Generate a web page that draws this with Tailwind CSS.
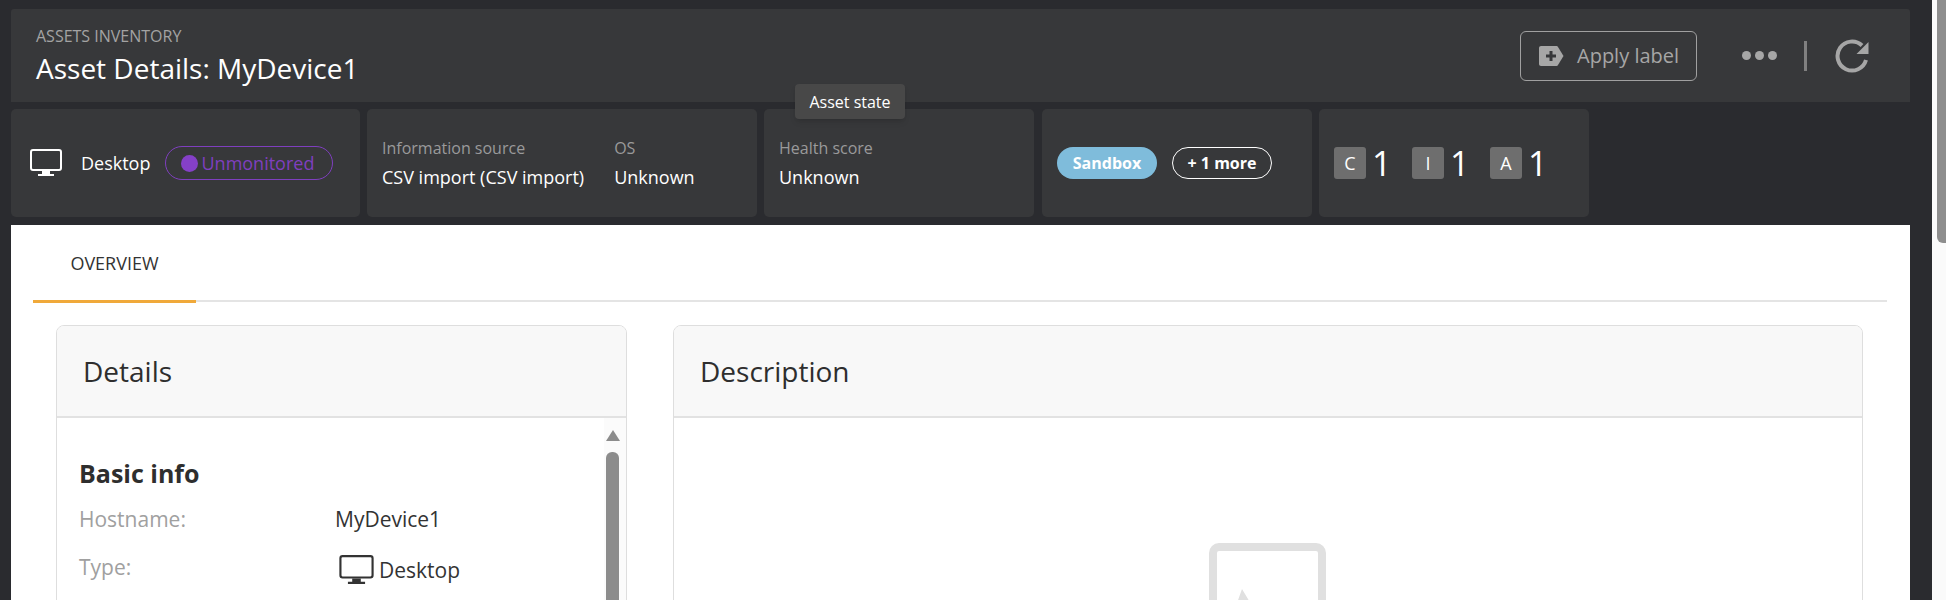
<!DOCTYPE html>
<html lang="en">
<head>
    <meta charset="UTF-8">
    <title>Asset Details</title>
    <script src="https://cdn.jsdelivr.net/npm/@tailwindcss/browser@4"></script>
</head>
<body class="h-[600px] overflow-hidden flex bg-[#2a2b2f] font-['Open_Sans','Noto_Sans',sans-serif]">
    <div class="w-[1932px] h-[600px] overflow-hidden pl-[11px] pr-[22px] pt-[9px] relative">
        <header class="h-[93px] bg-[#37383a] rounded-t-[3px] flex items-center justify-between pl-[25px] pr-[40px]">
            <div>
                <div class="text-[16px] leading-[22px] text-[#a3a3a3] uppercase">Assets Inventory</div>
                <h1 class="text-[28px] leading-[38px] font-medium text-white mt-[2px]">Asset Details: MyDevice1</h1>
            </div>
            <div class="flex items-center">
                <button class="w-[177px] h-[50px] border border-[#a0a0a0] rounded-[6px] flex items-center pl-[18px] text-[#a6a6a6] text-[20px]">
                    <svg class="w-[25px] h-[20px] mr-[13px]" viewBox="0 0 25 20"><path fill="#a6a6a6" d="M2 0h15c1 0 1.600.4 2 1l5.500 9-5.500 9c-.4.6-1 1-2 1H2c-1.100 0-2-.9-2-2V2C0 .9.900 0 2 0z"/><path fill="#37383a" d="M10.500 5h3v3.500H17v3h-3.500V15h-3v-3.500H7v-3h3.500z"/></svg>
                    Apply label
                </button>
                <div class="flex gap-[4px] ml-[45px]">
                    <span class="w-[9px] h-[9px] rounded-full bg-[#a6a6a6]"></span>
                    <span class="w-[9px] h-[9px] rounded-full bg-[#a6a6a6]"></span>
                    <span class="w-[9px] h-[9px] rounded-full bg-[#a6a6a6]"></span>
                </div>
                <div class="w-[3px] h-[30px] bg-[#808080] ml-[27px] mr-[28px]"></div>
                <svg class="w-[35px] h-[34px]" viewBox="0 0 35 34" fill="none"><path stroke="#a6a6a6" stroke-width="4" d="M31 21a14.500 14.500 0 1 1-4-14.500"/><path fill="#a6a6a6" d="M33.500 3v12H21.500z"/></svg>
            </div>
        </header>

        <section class="flex gap-[7px] mt-[7px] h-[108px] text-white">
            <div class="w-[349px] bg-[#37383a] rounded-[5px] flex items-center pl-[19px]">
                <svg class="w-[32px] h-[28px]" viewBox="0 0 32 28"><rect x="1" y="1" width="30" height="20" rx="2" fill="none" stroke="#fff" stroke-width="2"/><path fill="#fff" d="M12 22h8v3h-8zM8 25h16v2H8z"/></svg>
                <span class="text-[18px] ml-[19px]">Desktop</span>
                <span class="ml-[15px] w-[168px] h-[34px] rounded-full border border-[#7f3fbf] flex items-center pl-[15px] text-[#7f3fbf] text-[18px]">
                    <span class="w-[17px] h-[17px] rounded-full bg-[#8540c8] mr-[3px]"></span>Unmonitored
                </span>
            </div>
            <div class="w-[390px] bg-[#37383a] rounded-[5px] flex pl-[15px] pt-[26px] gap-[30px]">
                <div>
                    <div class="text-[16px] leading-[26px] text-[#9a9a9a]">Information source</div>
                    <div class="text-[18px] leading-[32px]">CSV import (CSV import)</div>
                </div>
                <div>
                    <div class="text-[16px] leading-[26px] text-[#9a9a9a]">OS</div>
                    <div class="text-[18px] leading-[32px]">Unknown</div>
                </div>
            </div>
            <div class="w-[270px] bg-[#37383a] rounded-[5px] pl-[15px] pt-[26px]">
                <div class="text-[16px] leading-[26px] text-[#9a9a9a]">Health score</div>
                <div class="text-[18px] leading-[32px]">Unknown</div>
            </div>
            <div class="w-[270px] ml-[1px] bg-[#37383a] rounded-[5px] flex items-center pl-[15px] gap-[15px]">
                <span class="w-[100px] h-[32px] rounded-full bg-[#7fbcdb] flex items-center justify-center text-[16px] font-bold">Sandbox</span>
                <span class="w-[100px] h-[32px] rounded-full border border-white flex items-center justify-center text-[16px] font-bold">+ 1 more</span>
            </div>
            <div class="w-[270px] bg-[#37383a] rounded-[5px] flex items-center pl-[15px] gap-[23px]">
                <div class="flex items-center gap-[6px]"><span class="w-[32px] h-[32px] rounded-[3px] bg-[#6e6e6e] flex items-center justify-center text-[18px]">C</span><span class="text-[34px] leading-[32px] w-[17px]">1</span></div>
                <div class="flex items-center gap-[6px]"><span class="w-[32px] h-[32px] rounded-[3px] bg-[#6e6e6e] flex items-center justify-center text-[18px]">I</span><span class="text-[34px] leading-[32px] w-[17px]">1</span></div>
                <div class="flex items-center gap-[6px]"><span class="w-[32px] h-[32px] rounded-[3px] bg-[#6e6e6e] flex items-center justify-center text-[18px]">A</span><span class="text-[34px] leading-[32px] w-[17px]">1</span></div>
            </div>
        </section>

        <div class="absolute left-[795px] top-[84px] w-[110px] h-[35px] bg-[#484848] rounded-[4px] shadow-md flex items-center justify-center text-white text-[16px]">Asset state</div>

        <main class="bg-white mt-[8px] h-[400px] pl-[22px] pr-[23px]">
            <div class="h-[77px] border-b-2 border-[#e4e4e4] flex">
                <div class="w-[163px] h-[78px] border-b-[3px] border-[#f0a93a] flex items-center justify-center text-[18px] text-[#333] pt-[2px]">OVERVIEW</div>
            </div>
            <div class="flex gap-[46px] pl-[23px] pr-[24px] mt-[23px]">
                <div class="w-[571px] h-[300px] border border-[#dedede] rounded-t-[8px] overflow-hidden">
                    <div class="h-[92px] bg-[#f8f8f8] border-b-2 border-[#e2e2e2] flex items-center pl-[26px] text-[28px] text-[#2e2e2e]">Details</div>
                    <div class="flex">
                        <div class="flex-1 pl-[22px] pt-[35px]">
                            <h3 class="text-[25px] leading-[40px] font-bold text-[#2e2e2e]">Basic info</h3>
                            <div class="flex text-[21px] leading-[30px] mt-[11px]">
                                <div class="w-[256px] text-[#a0a0a0]">Hostname:</div>
                                <div class="text-[#333]">MyDevice1</div>
                            </div>
                            <div class="flex text-[21px] leading-[30px] mt-[18px]">
                                <div class="w-[260px] text-[#a0a0a0]">Type:</div>
                                <div class="flex items-center text-[#333] mt-[3px]">
                                    <svg class="w-[35px] h-[30px] mr-[5px]" viewBox="0 0 32 28"><rect x="1" y="1" width="30" height="20" rx="2" fill="none" stroke="#333" stroke-width="2"/><path fill="#333" d="M12 22h8v3h-8zM8 25h16v2H8z"/></svg>
                                    Desktop
                                </div>
                            </div>
                        </div>
                        <div class="w-[22px] bg-[#fbfbfb] flex flex-col items-center pt-[12px] pr-[5px]">
                            <span class="w-0 h-0 border-x-[7px] border-x-transparent border-b-[11px] border-b-[#8c8c8c]"></span>
                            <span class="w-[13px] h-[200px] bg-[#8c8c8c] rounded-t-[6px] mt-[11px]"></span>
                        </div>
                    </div>
                </div>
                <div class="flex-1 h-[300px] border border-[#dedede] rounded-t-[8px] overflow-hidden">
                    <div class="h-[92px] bg-[#f8f8f8] border-b-2 border-[#e2e2e2] flex items-center pl-[26px] text-[28px] text-[#2e2e2e]">Description</div>
                    <div class="flex justify-center pt-[125px] pr-[2px]">
                        <svg class="w-[117px] h-[117px]" viewBox="0 0 117 117"><rect x="4" y="4" width="109" height="109" rx="6" fill="none" stroke="#e0e0e0" stroke-width="8"/><path fill="#e0e0e0" d="M33 46l24 40 12-18 24 37H12z"/></svg>
                    </div>
                </div>
            </div>
        </main>
    </div>
    <div class="w-[14px] h-[600px] bg-[#fafafa] pl-[5px]">
        <div class="h-[243px] bg-[#8e8e8e] rounded-bl-[6px]"></div>
    </div>
</body>
</html>
